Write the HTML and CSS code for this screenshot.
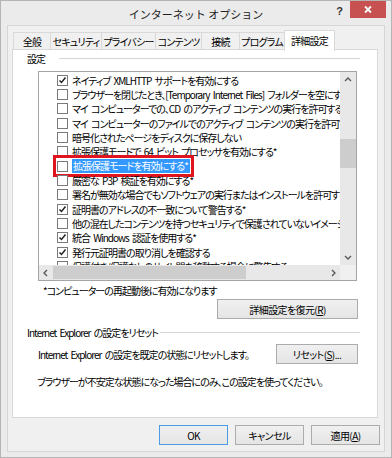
FILE: index.html
```html
<!DOCTYPE html>
<html lang="ja">
<head>
    <meta charset="UTF-8">
    <title>インターネット オプション</title>
    <link rel="stylesheet" href="styles.css">
</head>
<body>
    <div class="window">
        <div class="titlebar">
            <div></div>
            <div class="title">インターネット オプション</div>
            <div class="caption-buttons">
                <span class="help">?</span>
                <span class="close">
                    <svg width="10" height="9" viewBox="0 0 10 9"><path d="M2 1.5 L8 7.5 M8 1.5 L2 7.5" stroke="#fff" stroke-width="1.8"/></svg>
                </span>
            </div>
        </div>

        <div class="client">
            <div class="tabs">
                <div class="tab">全般</div>
                <div class="tab">セキュリティ</div>
                <div class="tab">プライバシー</div>
                <div class="tab">コンテンツ</div>
                <div class="tab">接続</div>
                <div class="tab">プログラム</div>
                <div class="tab active">詳細設定</div>
            </div>

            <div class="panel">
                <div class="group-head">
                    <span>設定</span>
                    <span class="rule"></span>
                </div>

                <div class="listbox">
                    <div class="list-main">
                        <div class="rows" id="rows"></div>
                        <div class="vscroll">
                            <svg width="16" height="14" viewBox="0 0 16 14"><path d="M5 9 L8 6 L11 9" fill="none" stroke="#555" stroke-width="1.3"/></svg>
                            <div class="vtrack"><div class="vthumb"></div></div>
                            <svg width="16" height="14" viewBox="0 0 16 14"><path d="M5 5 L8 8 L11 5" fill="none" stroke="#555" stroke-width="1.3"/></svg>
                        </div>
                    </div>
                    <div class="list-bottom">
                        <div class="hscroll">
                            <svg width="14" height="14" viewBox="0 0 14 14"><path d="M8 4 L5 7 L8 10" fill="none" stroke="#555" stroke-width="1.3"/></svg>
                            <div class="htrack"><div class="hthumb"></div></div>
                            <svg width="14" height="14" viewBox="0 0 14 14"><path d="M6 4 L9 7 L6 10" fill="none" stroke="#555" stroke-width="1.3"/></svg>
                        </div>
                        <div class="corner"></div>
                    </div>
                </div>

                <div class="note">*コンピューターの再起動後に有効になります</div>

                <div class="restore-row">
                    <button class="btn restore">詳細設定を復元(<u>R</u>)</button>
                </div>

                <div class="group-head reset-head">
                    <span>Internet Explorer の設定をリセット</span>
                    <span class="rule"></span>
                </div>

                <div class="reset-row">
                    <span>Internet Explorer の設定を既定の状態にリセットします。</span>
                    <button class="btn reset">リセット(<u>S</u>)...</button>
                </div>

                <div class="warn">ブラウザーが不安定な状態になった場合にのみ、この設定を使ってください。</div>
            </div>

            <div class="footer">
                <button class="btn dialog default">OK</button>
                <button class="btn dialog">キャンセル</button>
                <button class="btn dialog">適用(<u>A</u>)</button>
            </div>
        </div>
    </div>

    <script>
        // Settings list: [label, checked, marked]
        const items = [
            ["ネイティブ XMLHTTP サポートを有効にする", true],
            ["ブラウザーを閉じたとき、[Temporary Internet Files] フォルダーを空にする", false],
            ["マイ コンピューターでの、CD のアクティブ コンテンツの実行を許可する*", false],
            ["マイ コンピューターのファイルでのアクティブ コンテンツの実行を許可する*", false],
            ["暗号化されたページをディスクに保存しない", false],
            ["拡張保護モードで 64 ビット プロセッサを有効にする*", false],
            ["拡張保護モードを有効にする*", false, true],
            ["厳密な P3P 検証を有効にする*", false],
            ["署名が無効な場合でもソフトウェアの実行またはインストールを許可する", false],
            ["証明書のアドレスの不一致について警告する*", true],
            ["他の混在したコンテンツを持つセキュリティで保護されていないイメージをブロックする", false],
            ["統合 Windows 認証を使用する*", true],
            ["発行元証明書の取り消しを確認する", true],
            ["保護付き/保護なしのサイト間を移動する場合に警告する", false]
        ];

        const checkSvg = '<svg width="9" height="9" viewBox="0 0 9 9"><path d="M1.5 4.5 L3.5 6.5 L7.5 1.5" fill="none" stroke="#222" stroke-width="1.5"/></svg>';
        const rows = document.getElementById("rows");

        items.forEach(item => {
            const row = document.createElement("div");
            row.classList.add("row");

            const box = '<span class="check">' + (item[1] ? checkSvg : '') + '</span>';
            const label = '<span class="label">' + item[0] + '</span>';

            if (item[2]) {
                row.innerHTML = '<span class="mark">' + box + label + '</span>';
            } else {
                row.innerHTML = box + label;
            }
            rows.appendChild(row);
        });
    </script>
</body>
</html>
```

FILE: styles.css
```css
body {
    margin: 0;
    font-family: "Noto Sans CJK JP", sans-serif;
    font-size: 10px;
    font-feature-settings: "palt" 1, "pwid" 1;
    letter-spacing: -1px;
    word-spacing: 2px;
    color: #000;
    white-space: nowrap;
}

/* Window frame */
.window {
    width: 378px;
    height: 456px;
    border: 1px solid #b4b4b4;
    background-color: #ebebeb;
    padding: 0 6px;
    display: flex;
    flex-direction: column;
}

.titlebar {
    height: 24px;
    display: grid;
    grid-template-columns: 1fr auto 1fr;
    margin: 0 -6px;
}

.title {
    font-size: 11px;
    font-feature-settings: normal;
    letter-spacing: 0;
    word-spacing: 0;
    line-height: 26px;
    color: #222;
}

.caption-buttons {
    display: flex;
    justify-content: flex-end;
    align-items: flex-start;
}

.help {
    font-family: "Liberation Sans", sans-serif;
    font-weight: bold;
    font-size: 11px;
    line-height: 20px;
    margin-right: 8px;
    color: #333;
}

.close {
    width: 36px;
    height: 17px;
    background-color: #c75050;
    margin-right: 5px;
    display: flex;
    align-items: center;
    justify-content: center;
}

/* Client area */
.client {
    flex: 1;
    background-color: #f0f0f0;
    border: 1px solid #d6d6d6;
    margin-bottom: 5px;
    padding: 4px 5px 0 4px;
}

/* Tabs */
.tabs {
    display: grid;
    grid-template-columns: 38px 51px 54px 46px 38px 45px 50px;
    height: 20px;
    padding-left: 1px;
}

.tab {
    margin-top: 2px;
    height: 17px;
    line-height: 17px;
    text-align: center;
    letter-spacing: -0.8px;
    border: 1px solid #d9d9d9;
    border-bottom: none;
    border-left: none;
    background-color: #f0f0f0;
    box-sizing: border-box;
    overflow: hidden;
}

.tab:first-child {
    border-left: 1px solid #d9d9d9;
}

.tab.active {
    margin-top: 0;
    height: 21px;
    line-height: 19px;
    background-color: #fff;
    border-left: 1px solid #d9d9d9;
    margin-left: -1px;
    position: relative;
    z-index: 1;
}

/* Tab page */
.panel {
    margin-top: -1px;
    height: 369px;
    box-sizing: border-box;
    border: 1px solid #d9d9d9;
    background-color: #fff;
    margin-right: 1px;
}

.group-head {
    display: flex;
    align-items: center;
    height: 14px;
    margin-top: 1px;
    padding-left: 14px;
    padding-right: 17px;
}

.group-head .rule {
    flex: 1;
    height: 1px;
    background-color: #d5d5d5;
    margin-left: 14px;
}

.reset-head .rule {
    margin-left: 2px;
}

/* Settings list */
.listbox {
    margin: 6px 0 0 25px;
    width: 319px;
    height: 210px;
    box-sizing: border-box;
    border: 1px solid #a5a5a5;
    display: flex;
    flex-direction: column;
}

.list-main {
    flex: 1;
    display: flex;
    overflow: hidden;
}

.rows {
    flex: 1;
    overflow: hidden;
    padding-top: 1px;
}

.row {
    height: 14.33px;
    display: flex;
    align-items: center;
    padding-left: 18px;
}

.check {
    width: 11px;
    height: 11px;
    box-sizing: border-box;
    border: 1px solid #7a7a7a;
    background-color: #fff;
    display: flex;
    align-items: center;
    justify-content: center;
    margin-right: 4px;
    flex-shrink: 0;
}

.mark {
    display: flex;
    align-items: center;
    height: 100%;
    outline: 3px solid #e0141e;
    outline-offset: 1px;
}

.mark .label {
    background-color: #3399ff;
    color: #fff;
    padding: 0 2px 0 1px;
    line-height: 14px;
}

.vscroll {
    width: 16px;
    background-color: #e8e8e8;
    display: flex;
    flex-direction: column;
}

.vtrack {
    flex: 1;
    padding-top: 53px;
}

.vthumb {
    width: 16px;
    height: 29px;
    background-color: #cdcdcd;
}

.list-bottom {
    height: 15px;
    display: flex;
}

.hscroll {
    flex: 1;
    display: flex;
    align-items: center;
    background-color: #e8e8e8;
}

.htrack {
    flex: 1;
    height: 100%;
    padding-top: 1px;
    box-sizing: border-box;
}

.hthumb {
    width: 193px;
    height: 13px;
    background-color: #cdcdcd;
}

.corner {
    width: 16px;
    background-color: #f0f0f0;
}

/* Bottom of the tab page */
.note {
    margin-top: 3px;
    padding-left: 30px;
    line-height: 14px;
}

.restore-row {
    display: flex;
    justify-content: flex-end;
    padding-right: 19px;
    margin-top: 1px;
}

.btn {
    font-family: inherit;
    font-size: 10px;
    font-feature-settings: inherit;
    letter-spacing: -0.6px;
    height: 20px;
    padding: 0;
    border: 1px solid #acacac;
    background: linear-gradient(#f0f0f0, #e5e5e5);
    color: #000;
}

.restore {
    width: 141px;
}

.reset-head {
    margin-top: 6px;
}

.reset-row {
    display: flex;
    align-items: center;
    justify-content: space-between;
    padding-left: 25px;
    padding-right: 19px;
    margin-top: 5px;
}

.reset {
    width: 82px;
}

.warn {
    margin-top: 11px;
    padding-left: 24px;
    line-height: 14px;
}

/* Dialog buttons */
.footer {
    display: flex;
    justify-content: flex-end;
    gap: 7px;
    margin-top: 7px;
    margin-right: -1px;
}

.dialog {
    width: 69px;
}

.dialog.default {
    border-color: #4d9be5;
}
```
